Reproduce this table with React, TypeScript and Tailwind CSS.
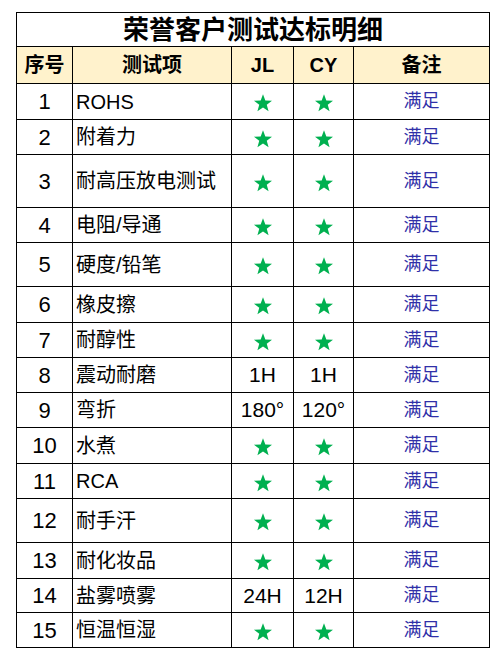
const rows: { no: string; item: string; jl: string; cy: string; h: number }[] = [
  { no: "1", item: "ROHS", jl: "*", cy: "*", h: 36 },
  { no: "2", item: "附着力", jl: "*", cy: "*", h: 35 },
  { no: "3", item: "耐高压放电测试", jl: "*", cy: "*", h: 53 },
  { no: "4", item: "电阻/导通", jl: "*", cy: "*", h: 35 },
  { no: "5", item: "硬度/铅笔", jl: "*", cy: "*", h: 44 },
  { no: "6", item: "橡皮擦", jl: "*", cy: "*", h: 36 },
  { no: "7", item: "耐醇性", jl: "*", cy: "*", h: 35 },
  { no: "8", item: "震动耐磨", jl: "1H", cy: "1H", h: 35 },
  { no: "9", item: "弯折", jl: "180°", cy: "120°", h: 35 },
  { no: "10", item: "水煮", jl: "*", cy: "*", h: 36 },
  { no: "11", item: "RCA", jl: "*", cy: "*", h: 35 },
  { no: "12", item: "耐手汗", jl: "*", cy: "*", h: 44 },
  { no: "13", item: "耐化妆品", jl: "*", cy: "*", h: 36 },
  { no: "14", item: "盐雾喷雾", jl: "24H", cy: "12H", h: 34 },
  { no: "15", item: "恒温恒湿", jl: "*", cy: "*", h: 35 },
];

function Star() {
  return (
    <svg width="20" height="20" viewBox="0 0 24 24" className="inline-block align-middle">
      <polygon
        points="12,1.5 14.8,9 22.8,9.2 16.5,14.1 18.7,21.8 12,17.3 5.3,21.8 7.5,14.1 1.2,9.2 9.2,9"
        fill="#00b050"
      />
    </svg>
  );
}

function Cell({ value }: { value: string }) {
  return (
    <td className="border border-black text-center align-middle p-0 text-[21px]">
      {value === "*" ? <Star /> : value}
    </td>
  );
}

export default function App() {
  return (
    <div
      className="w-[498px] h-[667px] bg-white pt-3 pl-4"
      style={{ fontFamily: '"Liberation Sans", "Noto Sans CJK SC", sans-serif' }}
    >
      <table className="table-fixed border-collapse w-[473px] text-black">
        <colgroup>
          <col className="w-[56px]" />
          <col className="w-[159px]" />
          <col className="w-[62px]" />
          <col className="w-[60px]" />
          <col className="w-[136px]" />
        </colgroup>
        <tbody>
          {/* 标题 */}
          <tr className="h-[34px]">
            <td colSpan={5} className="border border-black text-center align-middle p-0 text-[26px] font-bold leading-none">
              荣誉客户测试达标明细
            </td>
          </tr>

          {/* 表头 */}
          <tr className="h-[37px] bg-[#fff2cc] font-bold text-[20px]">
            <td className="border border-black text-center p-0">序号</td>
            <td className="border border-black text-center p-0">测试项</td>
            <td className="border border-black text-center p-0">JL</td>
            <td className="border border-black text-center p-0">CY</td>
            <td className="border border-black text-center p-0">备注</td>
          </tr>

          {rows.map((r) => (
            <tr key={r.no} style={{ height: r.h }}>
              <td className="border border-black text-center align-middle p-0 text-[22px]">{r.no}</td>
              <td className="border border-black align-middle p-0 pl-[3px] text-[20px] whitespace-nowrap">{r.item}</td>
              <Cell value={r.jl} />
              <Cell value={r.cy} />
              <td className="border border-black text-center align-middle p-0 text-[18px] text-[#3030a8]">满足</td>
            </tr>
          ))}
        </tbody>
      </table>
    </div>
  );
}
